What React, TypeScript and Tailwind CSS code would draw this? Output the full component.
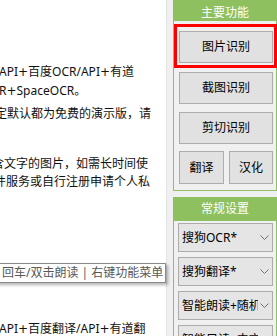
import React from 'react';

// the "+" in the original font is much wider than Noto Sans' one
const withPlus = (text: string) =>
  text.split('+').map((part, i) => (
    <React.Fragment key={i}>
      {i > 0 && <span className="font-['DejaVu_Sans',sans-serif]">+</span>}
      {part}
    </React.Fragment>
  ));

const Line: React.FC<{ text: string; className?: string }> = ({ text, className }) => (
  <div className={`h-[18px] whitespace-nowrap leading-[18px] ${className ?? ''}`}>{withPlus(text)}</div>
);

const Chevron: React.FC = () => (
  <svg width="9" height="5" viewBox="0 0 9 5" className="shrink-0">
    <polyline points="0.5,0.5 4.5,4.5 8.5,0.5" fill="none" stroke="#707070" strokeWidth="1" />
  </svg>
);

const Dropdown: React.FC<{ label: string; className?: string }> = ({ label, className }) => (
  <div
    className={`ml-[4px] flex h-[29px] w-[95px] shrink-0 items-center border border-[#acacac] bg-[#e5e5e5] pr-[4px] pl-[3px] ${className ?? ''}`}
  >
    <span className="flex-1 overflow-hidden whitespace-nowrap text-black">{label}</span>
    <span className="ml-[2px] flex w-[8px] justify-center">
      <Chevron />
    </span>
  </div>
);

export default function App() {
  return (
    <div className="relative flex h-[336px] w-[277px] overflow-hidden bg-[#f0f0f0] font-['Noto_Sans','Noto_Sans_CJK_SC',sans-serif] text-[12px]">
      {/* text pane, scrolled so both ends are cut off */}
      <div className="h-full w-[167px] shrink-0 overflow-hidden border-r border-[#e3e3e3] bg-white text-[#111]">
        <Line text="API+百度OCR/API+有道" className="mt-[63px] -ml-[1px]" />
        <Line text="R+SpaceOCR。" className="mt-[1px] -ml-[1px]" />
        <Line text="定默认都为免费的演示版，请" className="mt-[5px] -ml-[5px]" />
        <Line text="含文字的图片，如需长时间使" className="mt-[32px] -ml-[8px]" />
        <Line text="件服务或自行注册申请个人私" className="-ml-[6px]" />
        <Line text="API+百度翻译/API+有道翻" className="mt-[129px] -ml-[1px]" />
      </div>

      {/* right column */}
      <div className="ml-[6px] flex w-[104px] shrink-0 flex-col">
        <div className="flex flex-col border-x border-b border-[#8ec05f] pb-[6px]">
          <div className="h-[21px] bg-[#8ec05f] pt-[4px] text-center leading-[18px] text-white">主要功能</div>
          <button className="mt-[10px] ml-[5px] flex h-[32px] w-[94px] items-center justify-center border border-[#adadad] bg-[#e1e1e1] text-black">
            图片识别
          </button>
          <button className="mt-[9px] ml-[5px] flex h-[32px] w-[94px] items-center justify-center border border-[#adadad] bg-[#e1e1e1] text-black">
            截图识别
          </button>
          <button className="mt-[8px] ml-[5px] flex h-[32px] w-[94px] items-center justify-center border border-[#adadad] bg-[#e1e1e1] text-black">
            剪切识别
          </button>
          <div className="mt-[7px] ml-[5px] flex h-[33px] gap-[5px]">
            <button className="flex w-[45px] items-center justify-center border border-[#adadad] bg-[#e1e1e1] text-black">
              翻译
            </button>
            <button className="flex w-[44px] items-center justify-center border border-[#adadad] bg-[#e1e1e1] text-black">
              汉化
            </button>
          </div>
        </div>

        <div className="mt-[6px] flex flex-1 flex-col border-x border-[#8ec05f]">
          <div className="h-[24px] shrink-0 bg-[#8ec05f] text-center leading-[24px] text-white">常规设置</div>
          <Dropdown label="搜狗OCR*" className="mt-[2px]" />
          <Dropdown label="搜狗翻译*" className="mt-[5px]" />
          <Dropdown label="智能朗读+随机" className="mt-[5px]" />
          <Dropdown label="智能只读+中文" className="mt-[5px]" />
        </div>
      </div>

      {/* highlight around the active button */}
      <div className="pointer-events-none absolute top-[24px] left-[174px] h-[44px] w-[103px] border-[3px] border-[#ff0000]" />

      {/* tooltip */}
      <div className="absolute top-[263px] left-[-4px] h-[20px] w-[170px] border border-[#8a8a8a] bg-white pl-[5px] leading-[18px] whitespace-nowrap text-[#575757] shadow-[2px_2px_3px_rgba(0,0,0,0.3)]">
        回车/双击朗读 | 右键功能菜单
      </div>
    </div>
  );
}
